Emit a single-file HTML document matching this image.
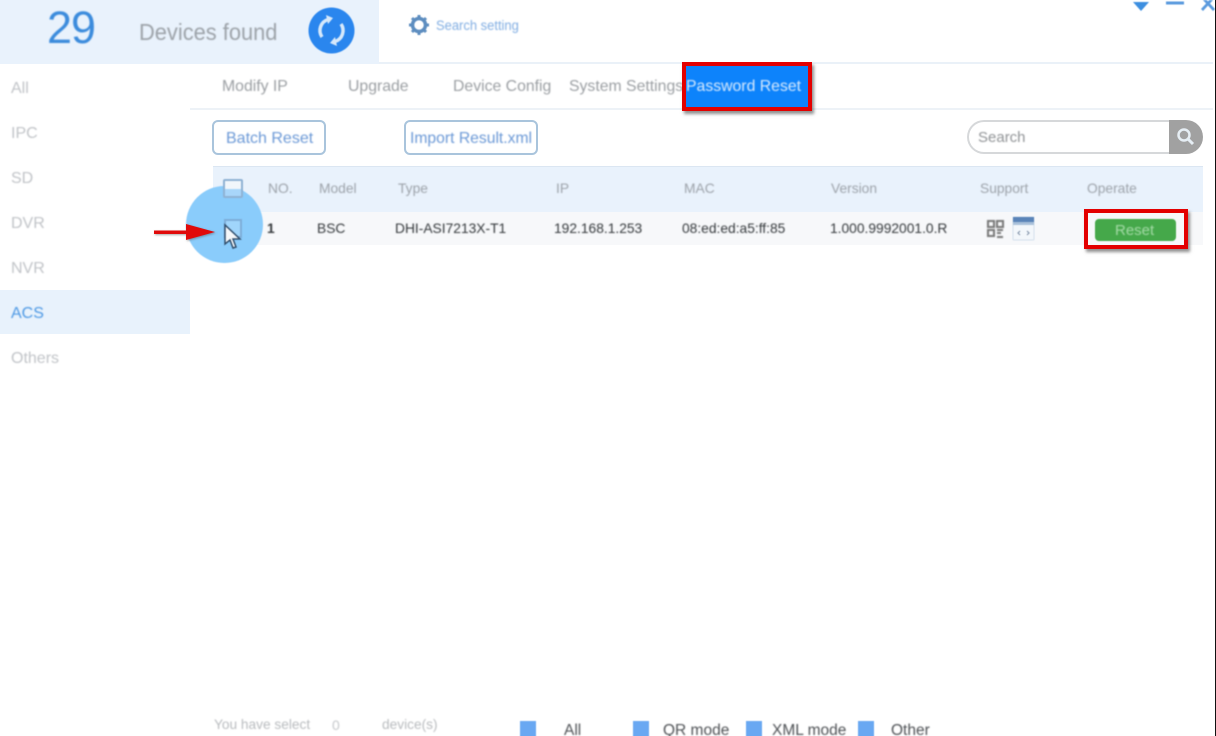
<!DOCTYPE html>
<html>
<head>
<meta charset="utf-8">
<style>
html,body{margin:0;padding:0;background:#fff}
#p{position:relative;width:1216px;height:736px;overflow:hidden;background:#fff;font-family:"Liberation Sans",sans-serif;color:#999}
#p div,#p span.t{position:absolute}
.t{white-space:nowrap;filter:blur(.7px);line-height:1;transform-origin:left}
.side{left:11px;font-size:16px;color:#c0c3c7}
.tab{top:79px;font-size:15.8px;color:#9a9ea2}
.th{top:182px;font-size:13.8px;color:#9ca2a9}
.td{top:222px;font-size:13.8px;color:#33373a}
.red{border:4px solid #e30000;box-sizing:border-box;box-shadow:2px 3px 3px rgba(70,70,70,.6)}
.btn{border:2px solid #a9c4dc;border-radius:6px;box-sizing:border-box;background:#fff}
.sq{width:16px;height:16px;background:#69a8f2;top:721px;filter:blur(.6px)}
.leg{top:723px;font-size:15.5px;color:#4d5054}
</style>
</head>
<body>
<div id="p">
  <!-- header -->
  <div style="left:0;top:0;width:379px;height:64px;background:#e9f2fc"></div>
  <div style="left:379px;top:62px;width:834px;height:2px;background:#eaf1f8"></div>
  <span class="t" style="left:47px;top:5px;font-size:45px;color:#3b8bdc;letter-spacing:-1px">29</span>
  <span class="t" style="left:139px;top:21px;font-size:23px;color:#9ca2a8;transform:scaleX(.95)">Devices found</span>
  <svg style="position:absolute;left:308px;top:7px;filter:blur(.6px)" width="47" height="47" viewBox="0 0 47 47">
    <circle cx="23.5" cy="23.5" r="23" fill="#2a86ee"/>
    <path d="M14 30 A11.5 11.5 0 0 1 20 12.500" fill="none" stroke="#d5e8fb" stroke-width="3.500"/>
    <path d="M18 8 L25 11 L20 17Z" fill="#d5e8fb"/>
    <path d="M33 17 A11.500 11.500 0 0 1 27 34.500" fill="none" stroke="#d5e8fb" stroke-width="3.500"/>
    <path d="M29 39 L22 36 L27 30Z" fill="#d5e8fb"/>
  </svg>
  <svg style="position:absolute;left:408px;top:14px;filter:blur(.6px)" width="22" height="22" viewBox="0 0 22 22">
    <circle cx="11" cy="11" r="6.500" fill="none" stroke="#5e8ec0" stroke-width="3.500"/>
    <path d="M11 1V5M11 17V21M1 11H5M17 11H21M4 4L7 7M15 15L18 18M18 4L15 7M7 15L4 18" stroke="#5e8ec0" stroke-width="3"/>
  </svg>
  <span class="t" style="left:436px;top:19px;font-size:13.500px;color:#80ade2;transform:scaleX(.96)">Search setting</span>
  <svg style="position:absolute;left:1130px;top:0;filter:blur(.5px)" width="85" height="14" viewBox="0 0 85 14">
    <path d="M3 2H19L11 11Z" fill="#3d8fe0"/>
    <path d="M36 3H54" stroke="#5a9ade" stroke-width="3"/>
    <path d="M72 -3L84 10M84 -3L72 10" stroke="#5a9ade" stroke-width="2.800"/>
  </svg>

  <!-- sidebar -->
  <span class="t side" style="top:81px">All</span>
  <span class="t side" style="top:126px">IPC</span>
  <span class="t side" style="top:171px">SD</span>
  <span class="t side" style="top:216px">DVR</span>
  <span class="t side" style="top:261px">NVR</span>
  <div style="left:0;top:290px;width:190px;height:44px;background:#e8f2fc"></div>
  <span class="t side" style="top:306px;color:#4a97e4">ACS</span>
  <span class="t side" style="top:351px">Others</span>

  <!-- tabs -->
  <span class="t tab" style="left:222px">Modify IP</span>
  <span class="t tab" style="left:348px">Upgrade</span>
  <span class="t tab" style="left:453px">Device Config</span>
  <span class="t tab" style="left:569px">System Settings</span>
  <div style="left:190px;top:108px;width:1023px;height:2px;background:#edf2f7"></div>
  <div class="red" style="left:682px;top:62px;width:130px;height:49px;background:#0d83fb"></div>
  <span class="t tab" style="left:686px;color:#dcecfd">Password Reset</span>

  <!-- toolbar -->
  <div class="btn" style="left:212px;top:120px;width:114px;height:35px"></div>
  <span class="t" style="left:226px;top:131px;font-size:16px;color:#6a98d6">Batch Reset</span>
  <div class="btn" style="left:404px;top:120px;width:134px;height:35px"></div>
  <span class="t" style="left:410px;top:131px;font-size:15.700px;color:#6a98d6">Import Result.xml</span>
  <div style="left:967px;top:120px;width:210px;height:34px;border:2px solid #d6d8da;border-radius:17px 0 0 17px;box-sizing:border-box;border-right:0"></div>
  <span class="t" style="left:978px;top:130px;font-size:15px;color:#8f9295">Search</span>
  <div style="left:1169px;top:120px;width:34px;height:34px;background:#a1a1a1;border-radius:0 17px 17px 0"></div>
  <svg style="position:absolute;left:1175px;top:126px" width="22" height="22" viewBox="0 0 22 22">
    <circle cx="9" cy="9" r="5.500" fill="none" stroke="#e6eef4" stroke-width="2.500"/>
    <path d="M13 13L18 18" stroke="#e6eef4" stroke-width="3"/>
  </svg>

  <!-- table -->
  <div style="left:213px;top:166px;width:990px;height:46px;background:#e9f2fc;border-top:1px solid #dbe6f2;box-sizing:border-box"></div>
  <div style="left:213px;top:212px;width:990px;height:33px;background:#f7f8fa"></div>
  <span class="t th" style="left:268px">NO.</span>
  <span class="t th" style="left:319px">Model</span>
  <span class="t th" style="left:398px">Type</span>
  <span class="t th" style="left:556px">IP</span>
  <span class="t th" style="left:684px">MAC</span>
  <span class="t th" style="left:831px">Version</span>
  <span class="t th" style="left:980px">Support</span>
  <span class="t th" style="left:1087px">Operate</span>

  <span class="t td" style="left:267px;font-weight:bold">1</span>
  <span class="t td" style="left:317px">BSC</span>
  <span class="t td" style="left:395px">DHI-ASI7213X-T1</span>
  <span class="t td" style="left:554px">192.168.1.253</span>
  <span class="t td" style="left:682px">08:ed:ed:a5:ff:85</span>
  <span class="t td" style="left:830px">1.000.9992001.0.R</span>

  <svg style="position:absolute;left:986px;top:219px;filter:blur(.8px)" width="20" height="20" viewBox="0 0 20 20">
    <rect x="2" y="2" width="6" height="6" fill="none" stroke="#777" stroke-width="2"/>
    <rect x="11" y="2" width="6" height="6" fill="none" stroke="#777" stroke-width="2"/>
    <rect x="2" y="11" width="6" height="6" fill="none" stroke="#777" stroke-width="2"/>
    <path d="M11 11H17M11 14H15M11 18H17" stroke="#777" stroke-width="2"/>
  </svg>
  <svg style="position:absolute;left:1012px;top:216px;filter:blur(.6px)" width="23" height="25" viewBox="0 0 23 25">
    <rect x="1" y="1" width="21" height="23" rx="1" fill="#f3f7fb" stroke="#d5e0ec"/>
    <rect x="1" y="1" width="21" height="5" fill="#5a84b8"/>
    <rect x="1" y="6" width="21" height="3" fill="#a9c0da"/>
    <path d="M8 15L6 17L8 19M15 15L17 17L15 19" fill="none" stroke="#8a9bb0" stroke-width="1.200"/>
  </svg>

  <div class="red" style="left:1084px;top:209px;width:104px;height:40px"></div>
  <div style="left:1095px;top:219px;width:81px;height:22px;background:#45a84a;border-radius:4px;filter:blur(.5px)"></div>
  <span class="t" style="left:1115px;top:223px;font-size:15px;color:#a6dba8">Reset</span>

  <!-- highlight circle, checkboxes, pointer -->
  <div style="left:186px;top:186px;width:77px;height:77px;border-radius:50%;background:#8accfb;filter:blur(.5px)"></div>
  <div style="left:223px;top:179px;width:20px;height:19px;border:2px solid #8fb2d4;border-radius:2px;box-sizing:border-box;background:linear-gradient(#f1f6fb 55%,#a8d6fa 55%);filter:blur(.5px)"></div>
  <div style="left:224px;top:219px;width:18px;height:19px;border:2px solid #7eaed8;box-sizing:border-box;background:#a0d5fb;filter:blur(.5px)"></div>
  <svg style="position:absolute;left:223px;top:223px;filter:blur(.4px)" width="20" height="28" viewBox="0 0 20 28">
    <path d="M2 2V21L7 17L10 25L13 24L10 16L17 16Z" fill="#f5f7f9" stroke="#33506e" stroke-width="1.500"/>
  </svg>
  <svg style="position:absolute;left:152px;top:221px;filter:drop-shadow(1px 1px 1px rgba(80,80,80,.5))" width="64" height="22" viewBox="0 0 64 22">
    <path d="M2 9.500H34V3L63 11L34 19V13H2Z" fill="#e00a0a"/>
  </svg>

  <!-- footer -->
  <span class="t" style="left:214px;top:718px;font-size:13.700px;color:#b8bbbe">You have select</span>
  <span class="t" style="left:332px;top:718px;font-size:14px;color:#c4c7ca">0</span>
  <span class="t" style="left:382px;top:718px;font-size:13.700px;color:#b8bbbe">device(s)</span>
  <div class="sq" style="left:520px"></div>
  <span class="t leg" style="left:564px">All</span>
  <div class="sq" style="left:633px"></div>
  <span class="t leg" style="left:663px">QR mode</span>
  <div class="sq" style="left:746px"></div>
  <span class="t leg" style="left:772px">XML mode</span>
  <div class="sq" style="left:858px"></div>
  <span class="t leg" style="left:891px">Other</span>

  <!-- right edge -->
  <div style="left:1214.500px;top:0;width:1.500px;height:736px;background:#111"></div>
</div>
</body>
</html>
